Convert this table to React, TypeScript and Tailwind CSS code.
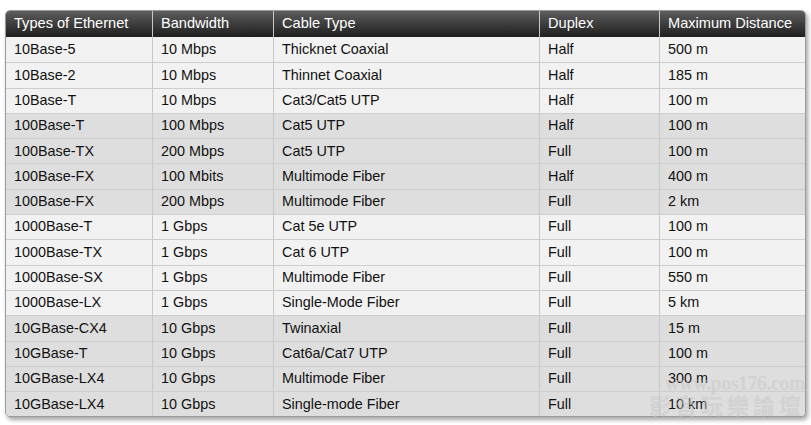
import React from "react";

const rows: [string, string, string, string, string][] = [
  ["10Base-5", "10 Mbps", "Thicknet Coaxial", "Half", "500 m"],
  ["10Base-2", "10 Mbps", "Thinnet Coaxial", "Half", "185 m"],
  ["10Base-T", "10 Mbps", "Cat3/Cat5 UTP", "Half", "100 m"],
  ["100Base-T", "100 Mbps", "Cat5 UTP", "Half", "100 m"],
  ["100Base-TX", "200 Mbps", "Cat5 UTP", "Full", "100 m"],
  ["100Base-FX", "100 Mbits", "Multimode Fiber", "Half", "400 m"],
  ["100Base-FX", "200 Mbps", "Multimode Fiber", "Full", "2 km"],
  ["1000Base-T", "1 Gbps", "Cat 5e UTP", "Full", "100 m"],
  ["1000Base-TX", "1 Gbps", "Cat 6 UTP", "Full", "100 m"],
  ["1000Base-SX", "1 Gbps", "Multimode Fiber", "Full", "550 m"],
  ["1000Base-LX", "1 Gbps", "Single-Mode Fiber", "Full", "5 km"],
  ["10GBase-CX4", "10 Gbps", "Twinaxial", "Full", "15 m"],
  ["10GBase-T", "10 Gbps", "Cat6a/Cat7 UTP", "Full", "100 m"],
  ["10GBase-LX4", "10 Gbps", "Multimode Fiber", "Full", "300 m"],
  ["10GBase-LX4", "10 Gbps", "Single-mode Fiber", "Full", "10 km"],
];

const headers = ["Types of Ethernet", "Bandwidth", "Cable Type", "Duplex", "Maximum Distance"];
const cols = "grid-cols-[146px_121px_266px_120px_1fr]";

export default function App() {
  return (
    <div className="relative w-[811px] h-[425px] bg-white overflow-hidden" style={{ fontFamily: '"Liberation Sans", Arial, sans-serif' }}>
      <div className="absolute left-[5px] top-[10px] w-[801px] rounded-[5px] border border-[#9a9a9a] overflow-hidden shadow-[2px_3px_4px_rgba(0,0,0,0.35)] bg-[#f1f1f1]">
        <div className={`grid ${cols} h-[26px] bg-gradient-to-b from-[#5e5e5e] to-[#1f1f1f] text-white text-[14.6px]`}>
          {headers.map((h, i) => (
            <div key={i} className={`flex items-center pl-[8px] ${i > 0 ? "border-l border-[#c8c8c8]" : ""}`}>
              {h}
            </div>
          ))}
        </div>
        {rows.map((r, ri) => {
          const dark = (ri >= 3 && ri <= 6) || ri >= 11;
          return (
            <div
              key={ri}
              className={`grid ${cols} h-[25.3px] text-[14.4px] text-[#111] ${dark ? "bg-[#dedede]" : "bg-[#f2f2f2]"} ${ri > 0 ? "border-t border-[#cdcdcd]" : ""}`}
            >
              {r.map((c, ci) => (
                <div key={ci} className={`flex items-center pl-[8px] ${ci > 0 ? "border-l border-[#c8c8c8]" : ""}`}>
                  {c}
                </div>
              ))}
            </div>
          );
        })}
      </div>
      <div className="absolute right-[6px] top-[373px] text-right leading-none select-none opacity-50 pointer-events-none" style={{ fontFamily: '"Liberation Serif", "Noto Sans CJK TC", serif' }}>
        <div className="text-[20px] font-bold text-[#c8c8c8] tracking-tight">www.pos176.com</div>
        <div className="text-[22px] font-bold text-[#c8c8c8] tracking-[4px]" style={{ fontFamily: '"Noto Sans CJK TC", sans-serif' }}>影音玩樂論壇</div>
      </div>
    </div>
  );
}
